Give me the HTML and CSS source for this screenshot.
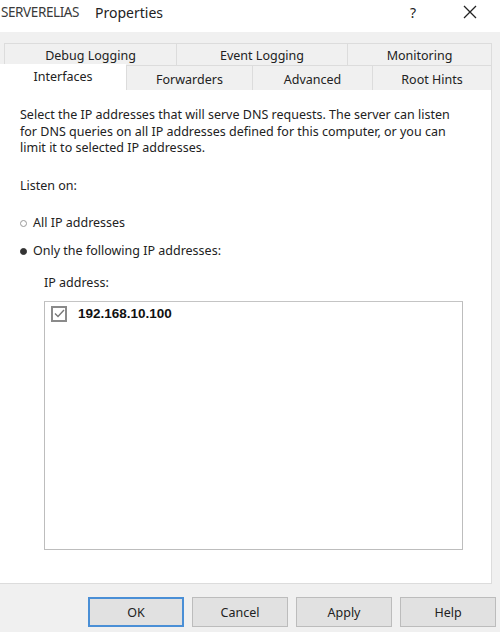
FILE: index.html
```html
<!DOCTYPE html>
<html>
<head>
<meta charset="utf-8">
<link rel="stylesheet" href="styles.css">
</head>
<body>
<div class="dialog">
  <div class="titlebar">
    <span class="server">SERVERELIAS</span>
    <span class="title">Properties</span>
    <span class="help">?</span>
    <span class="close">
      <svg width="14" height="14" viewBox="0 0 14 14"><path d="M1 1 L13 13 M13 1 L1 13" stroke="#222" stroke-width="1.3" fill="none"/></svg>
    </span>
  </div>
  <div class="body">
    <div class="tabs">
      <div class="tabrow back">
        <div class="tab t-debug">Debug Logging</div>
        <div class="tab t-event">Event Logging</div>
        <div class="tab t-mon">Monitoring</div>
      </div>
      <div class="tabrow front">
        <div class="tab t-if selected">Interfaces</div>
        <div class="tab t-fwd">Forwarders</div>
        <div class="tab t-adv">Advanced</div>
        <div class="tab t-root">Root Hints</div>
      </div>
    </div>
    <div class="panel">
      <p class="desc">Select the IP addresses that will serve DNS requests. The server can listen for DNS queries on all IP addresses defined for this computer, or you can limit it to selected IP addresses.</p>
      <div class="listen">Listen on:</div>
      <div class="radio r1"><span class="dot"></span>All IP addresses</div>
      <div class="radio r2"><span class="dot on"></span>Only the following IP addresses:</div>
      <div class="iplabel">IP address:</div>
      <div class="listbox">
        <div class="item">
          <span class="check">
            <svg width="11" height="9" viewBox="0 0 11 9"><path d="M1 4.5 L4 7.5 L10 1" stroke="#777" stroke-width="1.4" fill="none"/></svg>
          </span>
          <span class="ip">192.168.10.100</span>
        </div>
      </div>
    </div>
    <div class="buttons">
      <button class="btn default">OK</button>
      <button class="btn">Cancel</button>
      <button class="btn">Apply</button>
      <button class="btn">Help</button>
    </div>
  </div>
</div>
</body>
</html>
```

FILE: styles.css
```css
* { box-sizing: border-box; }
html, body { margin: 0; padding: 0; }
body {
  width: 500px;
  height: 632px;
  overflow: hidden;
  background: #f0f0f0;
  font-family: "Noto Sans", "Open Sans", sans-serif;
  color: #222;
}
.dialog { width: 500px; height: 632px; display: flex; flex-direction: column; }
.titlebar {
  height: 32px;
  background: #fff;
  display: flex;
  align-items: center;
  padding-bottom: 8px;
}
.server {
  margin-left: 1px;
  font-size: 13.5px;
  color: #3a3a3a;
  letter-spacing: -0.4px;
  width: 94px;
}
.title { font-size: 14px; color: #222; }
.help {
  margin-left: auto;
  font-size: 14px;
  color: #222;
  margin-right: 47px;
}
.close { margin-right: 23px; display: flex; }
.body { flex: 1; display: flex; flex-direction: column; }
.tabs { padding-top: 11px; }
.tabrow { display: flex; font-size: 12.5px; }
.tab {
  display: flex;
  align-items: center;
  justify-content: center;
  color: #222;
}
.back { height: 22px; margin-left: 4px; }
.back .tab {
  border-top: 1px solid #dcdcdc;
  border-left: 1px solid #dcdcdc;
  background: #f0f0f0;
  padding-top: 2px;
}
.back .t-mon { border-right: 1px solid #dcdcdc; }
.t-debug { width: 172px; }
.t-event { width: 171px; }
.t-mon { width: 145px; }
.front { height: 25px; }
.front .tab {
  border-top: 1px solid #dcdcdc;
  border-left: 1px solid #dcdcdc;
  background: #f0f0f0;
  padding-top: 2px;
}
.front .t-root { border-right: 1px solid #dcdcdc; }
.front .tab.selected {
  background: #fff;
  border: none;
  margin-top: -1px;
  height: 26px;
  padding-top: 0;
  padding-bottom: 2px;
}
.t-if { width: 126px; }
.t-fwd { width: 126px; }
.t-adv { width: 120px; }
.t-root { width: 120px; }
.panel {
  width: 492px;
  height: 494px;
  background: #fff;
  border-right: 1px solid #dcdcdc;
  border-bottom: 1px solid #dcdcdc;
  padding: 17px 24px 0 20px;
  font-size: 12.5px;
  line-height: 16.5px;
  color: #222;
}
.desc { margin: 0; }
.listen { margin-top: 21px; }
.radio { display: flex; align-items: center; height: 16px; }
.r1 { margin-top: 21px; }
.r2 { margin-top: 12px; }
.dot {
  width: 7px;
  height: 7px;
  border-radius: 50%;
  border: 1px solid #999;
  margin-right: 6px;
  background: #fff;
}
.dot.on { background: #333; border-color: #333; }
.iplabel { margin-top: 16px; margin-left: 24px; }
.listbox {
  margin-top: 9px;
  margin-left: 24px;
  width: 419px;
  height: 249px;
  border: 1px solid #bdbdbd;
  border-top-color: #c4c4c4;
  padding: 4px 6px;
}
.item { display: flex; align-items: center; }
.check {
  width: 16px;
  height: 16px;
  border: 2px solid #8a8a8a;
  display: flex;
  align-items: center;
  justify-content: center;
  margin-right: 11px;
  background: #fff;
}
.ip {
  font-family: "Liberation Sans", Arial, sans-serif;
  font-weight: bold;
  font-size: 13.5px;
  color: #111;
}
.buttons {
  display: flex;
  gap: 8px;
  padding-left: 88px;
  padding-top: 13px;
}
.btn {
  width: 96px;
  height: 30px;
  background: #e1e1e1;
  border: 1px solid #bcbcbc;
  font-family: "Noto Sans", "Open Sans", sans-serif;
  font-size: 12.5px;
  color: #222;
  padding: 0;
}
.btn.default { border: 2px solid #4a8fd6; }
```
